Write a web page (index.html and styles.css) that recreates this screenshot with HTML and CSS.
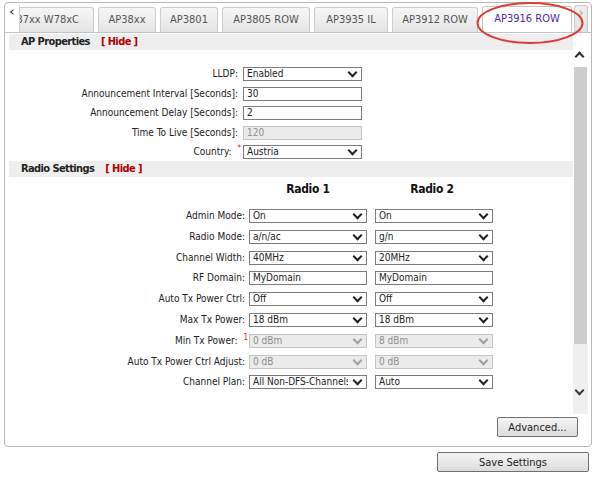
FILE: index.html
```html
<!DOCTYPE html>
<html>
<head>
<meta charset="utf-8">
<link rel="stylesheet" href="styles.css">
</head>
<body>
<div class="panel">
  <div class="tabbar">
    <div class="tab-arrow left"><span class="chev-l"></span></div>
    <div class="tabs">
      <div class="tab w1 first">37xx W78xC</div>
      <div class="tab w2">AP38xx</div>
      <div class="tab w2">AP3801</div>
      <div class="tab w3">AP3805 ROW</div>
      <div class="tab w4">AP3935 IL</div>
      <div class="tab w5">AP3912 ROW</div>
      <div class="tab w6 active">AP3916 ROW</div>
    </div>
    <div class="tab-arrow right"><span class="chev-r"></span></div>
  </div>
  <div class="body">
    <div class="scroller">
      <div class="content">
        <div class="section-head"><span class="title">AP Properties</span><span class="hide">[ Hide ]</span></div>
        <div class="form ap">
          <label>LLDP:</label><div class="select"><span>Enabled</span></div>
          <label>Announcement Interval [Seconds]:</label><div class="input">30</div>
          <label>Announcement Delay [Seconds]:</label><div class="input">2</div>
          <label>Time To Live [Seconds]:</label><div class="input disabled">120</div>
          <label>Country: <span class="req">*</span></label><div class="select"><span>Austria</span></div>
        </div>
        <div class="section-head"><span class="title">Radio Settings</span><span class="hide">[ Hide ]</span></div>
        <div class="radio-head">
          <span></span><span class="rh">Radio 1</span><span class="rh">Radio 2</span>
        </div>
        <div class="form radio">
          <label>Admin Mode:</label><div class="select"><span>On</span></div><div class="select"><span>On</span></div>
          <label>Radio Mode:</label><div class="select"><span>a/n/ac</span></div><div class="select"><span>g/n</span></div>
          <label>Channel Width:</label><div class="select"><span>40MHz</span></div><div class="select"><span>20MHz</span></div>
          <label>RF Domain:</label><div class="input">MyDomain</div><div class="input">MyDomain</div>
          <label>Auto Tx Power Ctrl:</label><div class="select"><span>Off</span></div><div class="select"><span>Off</span></div>
          <label>Max Tx Power:</label><div class="select"><span>18 dBm</span></div><div class="select"><span>18 dBm</span></div>
          <label>Min Tx Power: <span class="req">1</span></label><div class="select disabled"><span>0 dBm</span></div><div class="select disabled"><span>8 dBm</span></div>
          <label>Auto Tx Power Ctrl Adjust:</label><div class="select disabled"><span>0 dB</span></div><div class="select disabled"><span>0 dB</span></div>
          <label>Channel Plan:</label><div class="select"><span>All Non-DFS-Channels</span></div><div class="select"><span>Auto</span></div>
        </div>
      </div>
      <div class="scrollbar">
        <div class="sb-top"><span class="chev-up"></span></div>
        <div class="sb-thumb"></div>
        <div class="sb-track"><span class="chev-down"></span></div>
      </div>
    </div>
    <div class="actions"><button class="btn advanced">Advanced...</button></div>
  </div>
</div>
<div class="footer"><button class="btn save">Save Settings</button></div>
<svg class="annot" width="112" height="46" viewBox="0 0 112 46"><ellipse cx="54" cy="22" rx="52.5" ry="20" fill="none" stroke="#e03a36" stroke-width="2"/></svg>
</body>
</html>
```
FILE: styles.css
```css
* { box-sizing: border-box; }
body {
  margin: 0;
  width: 595px;
  height: 478px;
  overflow: hidden;
  position: relative;
  background: #fff;
  font-family: "DejaVu Sans Condensed", "DejaVu Sans", sans-serif;
  font-stretch: condensed;
  font-size: 10px;
  color: #222;
}
.panel {
  margin: 2px 3px 0 4px;
  height: 445px;
  border: 1px solid #b9b9b9;
  border-radius: 4px;
  display: flex;
  flex-direction: column;
}
.tabbar {
  display: flex;
  align-items: flex-end;
  height: 30px;
  padding: 0 3px 0 1px;
  border-bottom: 1px solid #c4c4c4;
}
.tab-arrow {
  width: 14px;
  height: 27px;
  position: relative;
  flex: none;
}
.tab-arrow.left {
  background: #fff;
  border-right: 1px solid #d0d0d0;
}
.tab-arrow.right {
  margin-left: 2px;
  background: linear-gradient(#efefef, #e2e2e2);
  border: 1px solid #c8c8c8;
  border-bottom: none;
  border-radius: 3px 3px 0 0;
}
.chev-l, .chev-r {
  position: absolute;
  top: 5px;
  width: 4px;
  height: 4px;
  border-left: 1.5px solid #333;
  border-bottom: 1.5px solid #333;
  transform: rotate(45deg);
  left: 5px;
}
.chev-r {
  border-color: #aaa;
  transform: rotate(-135deg);
  left: 3px;
}
.tabs {
  flex: 1;
  display: flex;
  align-items: flex-end;
  gap: 4px;
  height: 26px;
  overflow: hidden;
}
.tab {
  flex: none;
  height: 25px;
  line-height: 24px;
  text-align: center;
  font-size: 11px;
  color: #555;
  white-space: nowrap;
  background: linear-gradient(#f6f6f6, #e4e4e4);
  border: 1px solid #cdcdcd;
  border-bottom: none;
  border-radius: 3px 3px 0 0;
}
.tab.first {
  margin-left: -13px;
  text-align: right;
  padding-right: 14px;
}
.w1 { width: 87px; }
.w2 { width: 58px; }
.w3 { width: 88px; }
.w4 { width: 74px; }
.w5 { width: 86px; }
.w6 { width: 90px; }
.tab.active {
  height: 26px;
  background: #fff;
  color: #4b2aa8;
  border-color: #c4c4c4;
}
.body {
  flex: 1;
  display: flex;
  flex-direction: column;
  padding: 1px 3px 0 4px;
}
.scroller {
  display: flex;
  height: 380px;
}
.content {
  flex: 1;
  overflow: hidden;
}
.section-head {
  height: 16px;
  line-height: 16px;
  background: #eeeeee;
  padding-left: 12px;
  font-weight: bold;
  font-size: 11px;
  letter-spacing: -0.6px;
  color: #222;
}
.section-head .hide {
  color: #b00000;
  margin-left: 11px;
}
.form {
  display: grid;
  align-items: center;
}
.form.ap {
  grid-template-columns: 229px 119px;
  column-gap: 5px;
  row-gap: 5.5px;
  padding: 17px 0 2px;
}
.form label {
  text-align: right;
  white-space: nowrap;
  line-height: 14px;
}
.req {
  color: #e02020;
  font-size: 8px;
  vertical-align: top;
  line-height: 8px;
  margin-left: 3px;
  margin-right: -3px;
}
.radio-head {
  display: grid;
  grid-template-columns: 236px 118px 118px;
  column-gap: 4px;
  height: 32px;
  padding-top: 5px;
}
.radio-head .rh {
  text-align: center;
  font-weight: bold;
  font-size: 12px;
  letter-spacing: -0.3px;
  line-height: 14px;
  color: #111;
}
.radio-head .rh:last-child { margin-left: 4px; }
.form.radio {
  grid-template-columns: 232px 118px 118px;
  column-gap: 8px;
  row-gap: 6.8px;
}
.form.radio label { margin-right: -4px; }
.input, .select {
  height: 14px;
  line-height: 12px;
  border: 1px solid #7c7c7c;
  background: #fff;
  padding: 0 3px;
  white-space: nowrap;
  overflow: hidden;
  color: #222;
}
.select {
  position: relative;
  padding-right: 18px;
}
.select span {
  display: block;
  overflow: hidden;
}
.select::after {
  content: "";
  position: absolute;
  right: 5px;
  top: 1px;
  width: 5px;
  height: 5px;
  border-right: 2px solid #222;
  border-bottom: 2px solid #222;
  transform: rotate(45deg);
}
.disabled {
  background: #ebebeb;
  border-color: #c6c6c6;
  color: #8e8e8e;
}
.select.disabled::after { border-color: #a0a0a0; }
.scrollbar {
  width: 15px;
  display: flex;
  flex-direction: column;
  flex: none;
}
.sb-top {
  height: 33px;
  position: relative;
  background: #fff;
}
.sb-thumb {
  height: 277px;
  background: #cdcdcd;
  margin: 0 1px;
}
.sb-track {
  flex: 1;
  background: #f0f0f0;
  position: relative;
}
.chev-up, .chev-down {
  position: absolute;
  left: 3px;
  width: 7px;
  height: 7px;
  border-left: 2px solid #2a2a2a;
  border-top: 2px solid #2a2a2a;
  transform: rotate(45deg);
}
.chev-up { top: 19px; }
.chev-down {
  top: 43px;
  border-color: #3a3a3a;
  transform: rotate(-135deg);
}
.actions {
  display: flex;
  justify-content: flex-end;
  padding: 3px 10px 0 0;
}
.btn {
  height: 20px;
  padding: 0;
  border: 1px solid #707070;
  border-radius: 2px;
  background: linear-gradient(#f5f5f5, #dcdcdc);
  font-family: inherit;
  font-stretch: condensed;
  font-size: 11px;
  color: #222;
}
.advanced { width: 81px; }
.footer {
  display: flex;
  justify-content: flex-end;
  padding: 5px 6px 0 0;
}
.save { width: 152px; }
.annot {
  position: absolute;
  left: 476px;
  top: 1px;
  pointer-events: none;
}
```
